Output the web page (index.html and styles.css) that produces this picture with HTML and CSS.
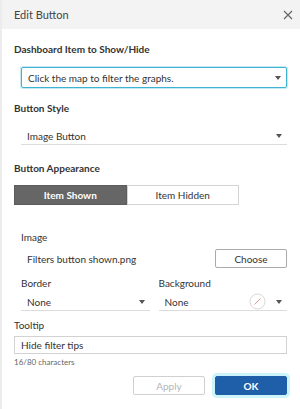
FILE: index.html
```html
<!DOCTYPE html>
<html lang="en">
<head>
  <meta charset="UTF-8">
  <meta name="viewport" content="width=device-width, initial-scale=1.0">
  <title>Edit Button</title>
  <link rel="stylesheet" href="styles.css">
</head>
<body>
  <div class="dialog">
    <header class="title-bar">
      <span class="title">Edit Button</span>
      <svg class="close" width="10" height="10" viewBox="0 0 10 10">
        <path d="M1 1 L9 9 M9 1 L1 9" stroke="#666" stroke-width="1.2" fill="none"/>
      </svg>
    </header>

    <div class="content">
      <div class="section-label first">Dashboard Item to Show/Hide</div>
      <div class="select boxed">
        <span>Click the map to filter the graphs.</span>
        <span class="arrow"></span>
      </div>

      <div class="section-label style-label">Button Style</div>
      <div class="select line style-select">
        <span>Image Button</span>
        <span class="arrow"></span>
      </div>

      <div class="section-label appearance-label">Button Appearance</div>
      <div class="toggle">
        <div class="toggle-item active">Item Shown</div>
        <div class="toggle-item">Item Hidden</div>
      </div>

      <div class="sub">
        <div class="field-label">Image</div>
        <div class="image-row">
          <span class="file-name">Filters button shown.png</span>
          <button class="btn">Choose</button>
        </div>

        <div class="two-col">
          <div class="col">
            <div class="field-label">Border</div>
            <div class="select line">
              <span>None</span>
              <span class="arrow"></span>
            </div>
          </div>
          <div class="col">
            <div class="field-label">Background</div>
            <div class="select line">
              <span>None</span>
              <span class="swatch">
                <svg width="17" height="17" viewBox="0 0 17 17">
                  <circle cx="8.5" cy="8.5" r="7.5" fill="#fff" stroke="#dcd6d8"/>
                  <path d="M5.5 11.5 L11.5 5.5" stroke="#d98a8f" stroke-width="0.9"/>
                </svg>
              </span>
              <span class="arrow"></span>
            </div>
          </div>
        </div>
      </div>

      <div class="field-label tooltip-label">Tooltip</div>
      <div class="text-input">Hide filter tips</div>
      <div class="hint">16/80 characters</div>

      <div class="actions">
        <button class="btn disabled">Apply</button>
        <button class="btn primary">OK</button>
      </div>
    </div>
  </div>
</body>
</html>
```

FILE: styles.css
```css
body, html {
  margin: 0;
  padding: 0;
  height: 100%;
  background: #fff;
}

.dialog {
  height: 100%;
  border-left: 2px solid #ececec;
  font-family: Lato, "Liberation Sans", sans-serif;
  font-size: 10px;
  color: #333;
  box-sizing: border-box;
}

.title-bar {
  height: 29px;
  background: #f3f3f3;
  display: flex;
  align-items: center;
  justify-content: space-between;
  padding: 0 7px 0 12px;
}

.title {
  font-size: 11px;
  color: #444;
}

.content {
  padding: 0 13px 0 12px;
}

.section-label {
  font-weight: bold;
  color: #333;
  line-height: 14px;
}

.section-label.first {
  margin-top: 13px;
}

.style-label {
  margin-top: 13px;
}

.appearance-label {
  margin-top: 16px;
}

.select {
  display: flex;
  align-items: center;
  height: 21px;
  padding: 0 5px 0 6px;
  margin-left: 7px;
  box-sizing: border-box;
}

.select > span:first-child {
  flex: 1;
}

.select.boxed {
  margin-top: 11px;
  border: 1px solid #3fb4d2;
  border-radius: 2px;
  box-shadow: 0 0 0 1px #c4e9f2;
}

.select.line {
  border-bottom: 1px solid #dcdcdc;
  padding-top: 3px;
}

.style-select {
  margin-top: 9px;
}

.arrow {
  width: 0;
  height: 0;
  border-left: 3px solid transparent;
  border-right: 3px solid transparent;
  border-top: 4px solid #555;
}

.swatch {
  display: flex;
  margin-right: 10px;
}

.toggle {
  display: flex;
  width: 225px;
  height: 20px;
  margin-top: 10px;
}

.toggle-item {
  flex: 1;
  display: flex;
  align-items: center;
  justify-content: center;
  border: 1px solid #d4d4d4;
  color: #333;
}

.toggle-item.active {
  background: #666;
  border-color: #5c5c5c;
  color: #fff;
  font-weight: bold;
}

.sub {
  padding-left: 7px;
  margin-top: 25px;
}

.field-label {
  line-height: 14px;
  color: #333;
}

.image-row {
  display: flex;
  align-items: center;
  justify-content: space-between;
  margin-top: 5px;
  padding-left: 6px;
}

.btn {
  font-family: inherit;
  font-size: 10px;
  width: 72px;
  height: 19px;
  padding: 0;
  background: #fff;
  border: 1px solid #aaa;
  border-radius: 2px;
  color: #333;
}

.two-col {
  display: flex;
  gap: 9px;
  margin-top: 8px;
}

.col {
  flex: 1;
}

.col .select {
  margin-left: 0;
}

.tooltip-label {
  margin-top: 7px;
}

.text-input {
  margin-top: 4px;
  height: 18px;
  border: 1px solid #d2d2d2;
  box-sizing: border-box;
  padding: 0 6px;
  display: flex;
  align-items: center;
}

.hint {
  font-size: 8px;
  line-height: 12px;
  color: #666;
  margin-top: 2px;
}

.actions {
  display: flex;
  justify-content: flex-end;
  gap: 10px;
  margin-top: 8px;
}

.btn.disabled {
  color: #b5b5b5;
  border-color: #d0d0d0;
}

.btn.primary {
  background: #1f5ea8;
  border-color: #1f5ea8;
  color: #fff;
  font-weight: bold;
  box-shadow: 0 0 0 3px #ccf4fa;
}
```
